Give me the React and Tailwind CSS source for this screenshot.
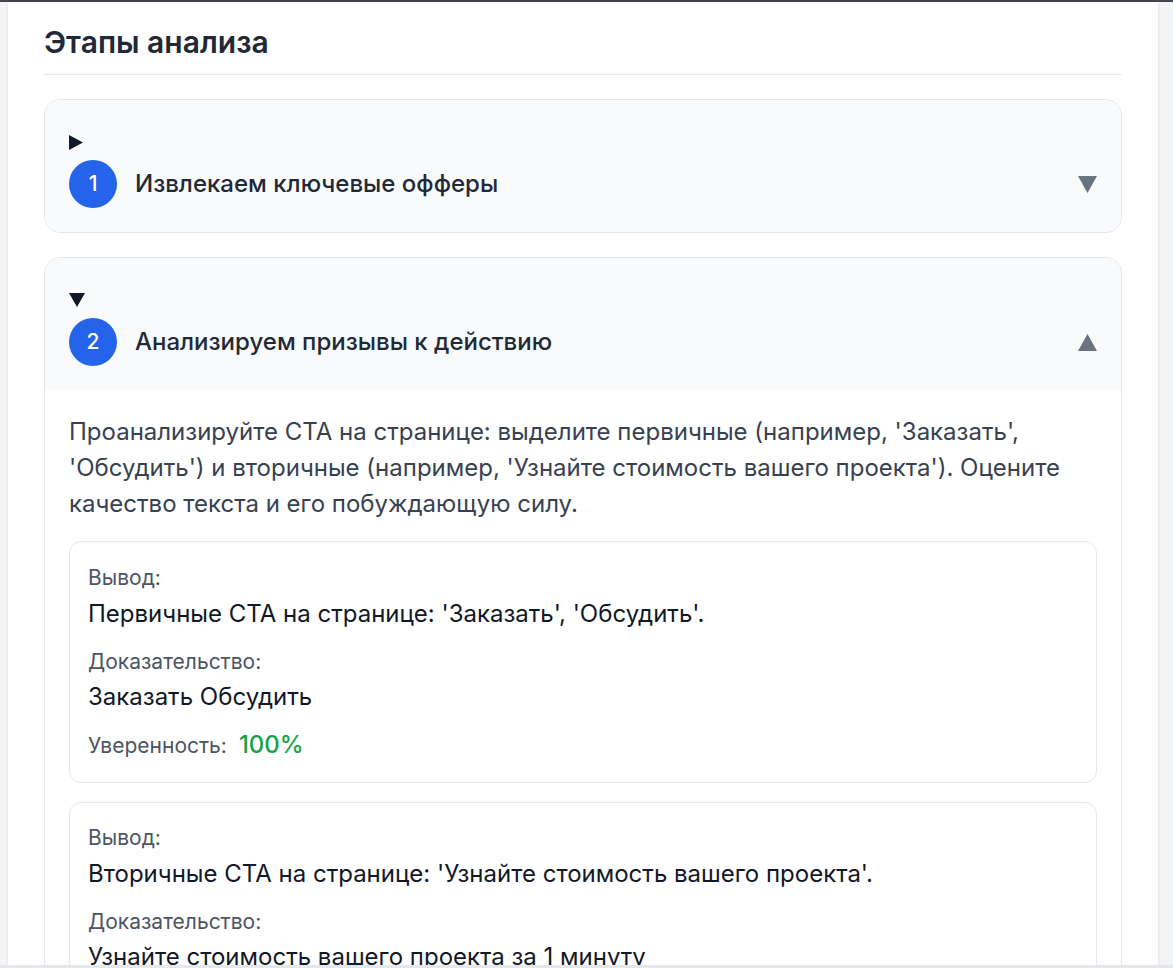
import React from "react";

function Marker({ open }) {
  return (
    <div className="h-9 flex items-center">
      {open ? (
        <svg width="16" height="14" viewBox="0 0 16 14">
          <polygon points="0,0 16,0 8,14" fill="#111827" />
        </svg>
      ) : (
        <svg width="14" height="15" viewBox="0 0 14 15">
          <polygon points="0,0 14,7.5 0,15" fill="#111827" />
        </svg>
      )}
    </div>
  );
}

function Caret({ open }) {
  return (
    <svg width="19" height="17" viewBox="0 0 19 17">
      {open ? (
        <polygon points="0,17 19,17 9.5,0" fill="#6b7280" />
      ) : (
        <polygon points="0,0 19,0 9.5,17" fill="#6b7280" />
      )}
    </svg>
  );
}

function StepHeader({ num, title, open }) {
  return (
    <div className="p-6 bg-[#f9fafb]">
      <Marker open={open} />
      <div className="flex items-center justify-between">
        <div className="flex items-center gap-[18px]">
          <div className="w-12 h-12 rounded-full bg-[#2563eb] text-white flex items-center justify-center text-[21px] font-medium">
            {num}
          </div>
          <span className="text-2xl leading-9 font-medium text-[#1f2937]">{title}</span>
        </div>
        <Caret open={open} />
      </div>
    </div>
  );
}

function Finding({ conclusion, evidence, confidence, first }) {
  return (
    <div
      className={
        "border border-[#e5e7eb] rounded-xl bg-white px-[18px] " +
        (first ? "pt-[21px] pb-[19px]" : "pt-[20px] pb-[17px]")
      }
    >
      <div className="text-[21px] leading-[30px] text-[#4b5563]">Вывод:</div>
      <div className="text-2xl leading-9 text-[#111827] mt-[3px]">{conclusion}</div>
      <div className="text-[21px] leading-[30px] text-[#4b5563] mt-[15px]">Доказательство:</div>
      <div className="text-2xl leading-9 text-[#111827] mt-[2px]">{evidence}</div>
      <div className="flex items-baseline gap-3 mt-[12px]">
        <span className="text-[21px] text-[#4b5563]">Уверенность:</span>
        <span className="text-2xl leading-9 font-medium text-[#16a34a]">{confidence}</span>
      </div>
    </div>
  );
}

export default function App() {
  return (
    <div className="min-h-screen bg-[#f3f4f6]" style={{ fontFamily: "Inter, 'Noto Sans', sans-serif" }}>
      <div className="h-[2px] bg-[#45454d]" />
      <div className="ml-2 w-[1150px] bg-white shadow-sm px-9 pt-[22px] pb-10">
        <h2 className="text-[30px] leading-9 font-semibold text-[#1f2937] pb-[14px] border-b border-[#e5e7eb] mb-6">
          Этапы анализа
        </h2>

        <div className="flex flex-col gap-6">
          <div className="border border-[#e5e7eb] rounded-2xl overflow-hidden">
            <StepHeader num="1" title="Извлекаем ключевые офферы" open={false} />
          </div>

          <div className="border border-[#e5e7eb] rounded-2xl overflow-hidden bg-white">
            <StepHeader num="2" title="Анализируем призывы к действию" open={true} />
            <div className="p-6">
              <p className="text-2xl leading-9 text-[#374151] mb-[19px]">
                Проанализируйте СТА на странице: выделите первичные (например, 'Заказать', 'Обсудить') и вторичные (например, 'Узнайте стоимость вашего проекта'). Оцените качество текста и его побуждающую силу.
              </p>
              <div className="flex flex-col gap-[19px]">
                <Finding
                  first
                  conclusion="Первичные СТА на странице: 'Заказать', 'Обсудить'."
                  evidence="Заказать Обсудить"
                  confidence="100%"
                />
                <Finding
                  conclusion="Вторичные СТА на странице: 'Узнайте стоимость вашего проекта'."
                  evidence="Узнайте стоимость вашего проекта за 1 минуту"
                  confidence="100%"
                />
              </div>
            </div>
          </div>
        </div>
      </div>
      <div className="fixed bottom-0 left-0 right-0 h-[3px] bg-[#e5e7eb]" />
    </div>
  );
}
